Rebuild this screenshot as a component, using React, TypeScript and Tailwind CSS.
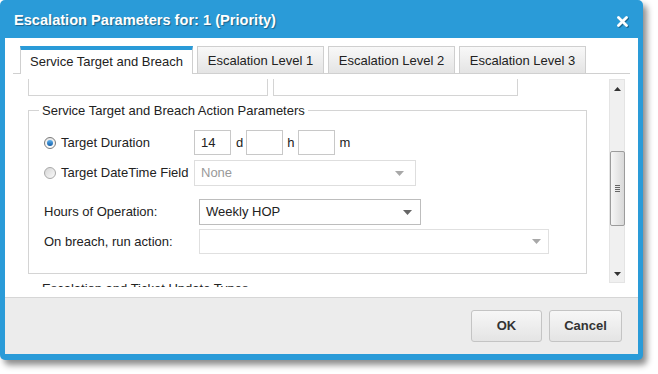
import React from 'react'

const BLUE = 'bg-[#2a9bd8]'

function Arrow({ color }: { color: string }) {
  return (
    <svg width="9" height="5" viewBox="0 0 9 5" className="shrink-0">
      <path d="M0 0 L9 0 L4.5 5 Z" fill={color} />
    </svg>
  )
}

function Radio({ checked }: { checked?: boolean }) {
  return checked ? (
    <span className="flex h-[12px] w-[12px] items-center justify-center rounded-full border border-[#7a7a7a] bg-gradient-to-b from-[#e8e8e8] to-[#ffffff]">
      <span className="h-[6px] w-[6px] rounded-full bg-gradient-to-b from-[#5fb2ee] to-[#0f5ea8]" />
    </span>
  ) : (
    <span className="h-[12px] w-[12px] rounded-full border border-[#a8a8a8] bg-gradient-to-br from-[#d6d6d6] to-[#fafafa]" />
  )
}

function Tab({ label, active, w }: { label: string; active?: boolean; w: string }) {
  if (active) {
    return (
      <div className={`${w} -mb-px flex h-[28px] items-center justify-center border-x border-t-[4px] border-x-[#cfcfcf] border-t-[#2a9bd8] bg-white pb-[1px]`}>
        {label}
      </div>
    )
  }
  return (
    <div className={`${w} flex h-[27px] items-center justify-center border border-b-0 border-[#cfcfcf] bg-gradient-to-b from-[#f8f8f8] to-[#e4e4e4] pt-[1px]`}>
      {label}
    </div>
  )
}

export default function App() {
  return (
    <div className="h-[374px] w-[658px] bg-white font-['Liberation_Sans',Arial,sans-serif] text-[13px] text-[#222]">
      <div className={`flex h-[360px] w-[643px] flex-col rounded-[5px] ${BLUE} px-[5px] pb-[6px] shadow-[4px_5px_6px_rgba(0,0,0,0.45)]`}>
        {/* title bar */}
        <div className="flex h-[38px] shrink-0 items-center justify-between pl-[9px] pr-[10px] pt-[4px]">
          <span className="text-[14.6px] font-bold text-white [text-shadow:1px_1px_1px_rgba(0,0,0,0.35)]">
            Escalation Parameters for: 1 (Priority)
          </span>
          <svg width="11" height="11" viewBox="0 0 11 11" className="drop-shadow-[1px_1px_0_rgba(0,0,0,0.35)]">
            <path d="M1.5 1.5 L9.5 9.5 M9.5 1.5 L1.5 9.5" stroke="white" strokeWidth="2.8" strokeLinecap="round" />
          </svg>
        </div>

        <div className="flex flex-1 flex-col bg-white">
          {/* tabs */}
          <div className="mx-[8px] mt-[8px] flex items-end gap-[4px] border-b border-[#d0d0d0] pl-[7px]">
            <Tab label="Service Target and Breach" active w="w-[173px]" />
            <Tab label="Escalation Level 1" w="w-[127px]" />
            <Tab label="Escalation Level 2" w="w-[127px]" />
            <Tab label="Escalation Level 3" w="w-[127px]" />
          </div>

          {/* panel */}
          <div className="flex flex-1 pl-[23px] pr-[13px] pt-[5px]">
            <div className="h-[208px] w-[581px] overflow-hidden">
              <div className="flex gap-[5px]">
                <div className="h-[17px] w-[240px] border border-t-0 border-[#d4d4d4]" />
                <div className="h-[17px] w-[245px] border border-t-0 border-[#d4d4d4]" />
              </div>

              <fieldset className="mt-[7px] w-[559px] border border-[#d4d4d4]">
                <legend className="ml-[10px] px-[3px] leading-[15px]">Service Target and Breach Action Parameters</legend>
                <div className="pb-[19px] pl-[15px] pt-[12px]">
                  <div className="flex h-[25px] items-center">
                    <div className="flex w-[150px] items-center gap-[5px]">
                      <Radio checked />
                      <span>Target Duration</span>
                    </div>
                    <div className="flex h-[25px] w-[37px] items-center border border-[#c8c8c8] px-[6px]">14</div>
                    <span className="ml-[5px] mr-[3px]">d</span>
                    <div className="h-[25px] w-[37px] border border-[#c8c8c8]" />
                    <span className="ml-[4px] mr-[4px]">h</span>
                    <div className="h-[25px] w-[37px] border border-[#c8c8c8]" />
                    <span className="ml-[4px]">m</span>
                  </div>

                  <div className="mt-[5px] flex h-[26px] items-center">
                    <div className="flex w-[150px] items-center gap-[5px]">
                      <Radio />
                      <span>Target DateTime Field</span>
                    </div>
                    <div className="flex h-[26px] w-[222px] items-center justify-between border border-[#dedede] pl-[6px] pr-[11px] text-[#999]">
                      <span>None</span>
                      <Arrow color="#a8a8a8" />
                    </div>
                  </div>

                  <div className="mt-[13px] flex h-[26px] items-center">
                    <span className="w-[155px]">Hours of Operation:</span>
                    <div className="flex h-[26px] w-[222px] items-center justify-between border border-[#bdbdbd] pl-[6px] pr-[8px]">
                      <span>Weekly HOP</span>
                      <Arrow color="#666" />
                    </div>
                  </div>

                  <div className="mt-[4px] flex h-[25px] items-center">
                    <span className="w-[155px]">On breach, run action:</span>
                    <div className="flex h-[25px] w-[350px] items-center justify-end border border-[#e0e0e0] pr-[7px]">
                      <Arrow color="#a8a8a8" />
                    </div>
                  </div>
                </div>
              </fieldset>

              <fieldset className="mt-[7px] w-[559px] border border-[#d4d4d4]">
                <legend className="ml-[10px] px-[3px] leading-[15px]">Escalation and Ticket Update Types</legend>
                <div className="h-[40px]" />
              </fieldset>
            </div>

            {/* scrollbar */}
            <div className="ml-auto flex h-[204px] w-[16px] flex-col items-center border border-[#e4e4e4] bg-[#f0f0f0]">
              <div className="flex h-[17px] items-center justify-center">
                <svg width="7" height="4" viewBox="0 0 7 4">
                  <path d="M0 4 L7 4 L3.5 0 Z" fill="#333" />
                </svg>
              </div>
              <div className="h-[54px]" />
              <div className="flex h-[75px] w-[15px] flex-col items-center justify-center gap-[1px] rounded-[2px] border border-[#9c9c9c] bg-gradient-to-r from-[#f6f6f6] to-[#d9d9d9]">
                <span className="h-px w-[5px] bg-[#666]" />
                <span className="h-px w-[5px] bg-[#666]" />
                <span className="h-px w-[5px] bg-[#666]" />
                <span className="h-px w-[5px] bg-[#666]" />
              </div>
              <div className="flex-1" />
              <div className="flex h-[17px] items-center justify-center">
                <svg width="7" height="4" viewBox="0 0 7 4">
                  <path d="M0 0 L7 0 L3.5 4 Z" fill="#333" />
                </svg>
              </div>
            </div>
          </div>

          {/* footer */}
          <div className="flex h-[57px] shrink-0 items-start justify-end gap-[7px] border-t border-[#d6d6d6] bg-[#ececec] pr-[16px] pt-[12px]">
            <button className="flex h-[32px] w-[71px] items-center justify-center rounded-[3px] border border-[#c4c4c4] bg-gradient-to-b from-[#f7f7f7] to-[#e4e4e4] font-bold text-[#333]">
              OK
            </button>
            <button className="flex h-[32px] w-[73px] items-center justify-center rounded-[3px] border border-[#c4c4c4] bg-gradient-to-b from-[#f7f7f7] to-[#e4e4e4] font-bold text-[#333]">
              Cancel
            </button>
          </div>
        </div>
      </div>
    </div>
  )
}
